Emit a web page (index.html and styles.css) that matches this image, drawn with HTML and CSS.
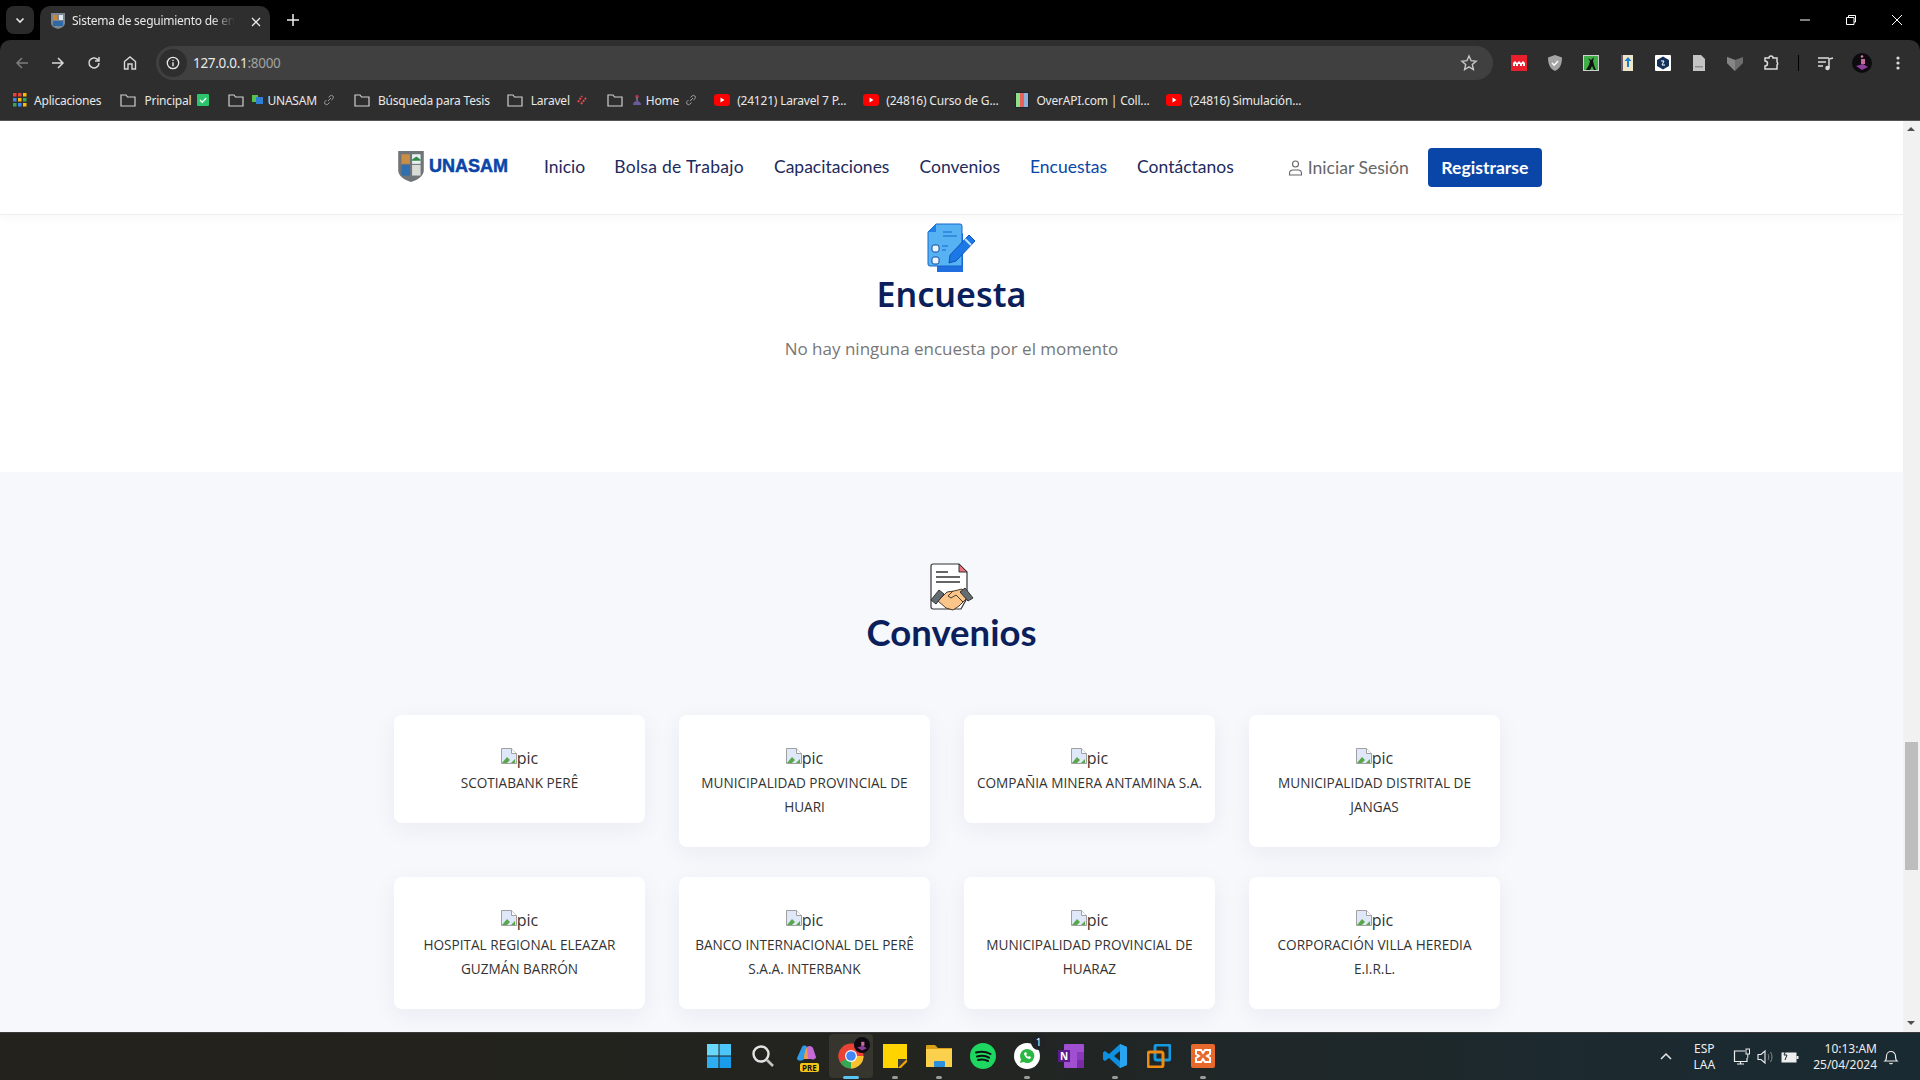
FILE: index.html
```html
<!DOCTYPE html>
<html lang="es">
<head>
  <meta charset="UTF-8" />
  <meta name="viewport" content="width=device-width, initial-scale=1.0"/>
  <title>Sistema de seguimiento de egresados</title>
  <link rel="stylesheet" href="styles.css">
</head>
<body>

<!-- browser: tabs -->
<div class="tabstrip">
  <div class="tab-search"><svg width="12" height="12" viewBox="0 0 12 12"><path d="M2.5 4.5 6 8l3.500-3.500" fill="none" stroke="#e8e8e8" stroke-width="1.600"/></svg></div>
  <div class="tab">
    <svg class="tab-icon" width="16" height="18" viewBox="0 0 16 18"><path d="M1 1h14v10c0 3-3 5-7 6-4-1-7-3-7-6z" fill="#7d8791"/><rect x="3" y="3" width="4" height="5" fill="#c9873a"/><rect x="9" y="3" width="4" height="5" fill="#dfe9ef"/><rect x="3" y="9" width="10" height="5" fill="#2f69a8"/></svg>
    <span class="tab-title">Sistema de seguimiento de en</span>
    <svg class="tab-x" width="10" height="10" viewBox="0 0 10 10"><path d="M1 1l8 8M9 1 1 9" stroke="#e8e8e8" stroke-width="1.300"/></svg>
  </div>
  <svg class="tab-new" width="14" height="14" viewBox="0 0 14 14"><path d="M7 1v12M1 7h12" stroke="#f0f0f0" stroke-width="1.500"/></svg>
  <div class="win-btns">
    <svg width="12" height="12" viewBox="0 0 12 12"><path d="M1 6h10" stroke="#fff"/></svg>
    <svg width="12" height="12" viewBox="0 0 12 12"><path d="M3.500 3V1.500h7V8H9M1.500 3.500H9V10.500H1.500z" fill="none" stroke="#fff"/></svg>
    <svg width="12" height="12" viewBox="0 0 12 12"><path d="M1 1l10 10M11 1 1 11" stroke="#fff"/></svg>
  </div>
</div>

<!-- browser: address bar -->
<div class="toolbar">
  <svg class="nav-btn" width="16" height="16" viewBox="0 0 16 16"><path d="M14 8H3M8 3 3 8l5 5" fill="none" stroke="#7d7d7d" stroke-width="1.500"/></svg>
  <svg class="nav-btn" width="16" height="16" viewBox="0 0 16 16"><path d="M2 8h11M8 3l5 5-5 5" fill="none" stroke="#d8d8d8" stroke-width="1.500"/></svg>
  <svg class="nav-btn" width="16" height="16" viewBox="0 0 16 16"><path d="M13 8a5 5 0 1 1-1.500-3.600L13 6M13 2v4H9" fill="none" stroke="#d8d8d8" stroke-width="1.500"/></svg>
  <svg class="nav-btn" width="16" height="16" viewBox="0 0 16 16"><path d="M2.500 14V6.500L8 2l5.500 4.500V14H10V9H6v5z" fill="none" stroke="#d8d8d8" stroke-width="1.400"/></svg>
  <div class="omnibox">
    <span class="info-chip"><svg width="14" height="14" viewBox="0 0 14 14"><circle cx="7" cy="7" r="5.700" fill="none" stroke="#e8e8e8" stroke-width="1.300"/><path d="M7 6.200v4M7 3.800v1.200" stroke="#e8e8e8" stroke-width="1.400"/></svg></span>
    <span class="url">127.0.0.1<span class="url-port">:8000</span></span>
    <svg class="star" width="18" height="18" viewBox="0 0 18 18"><path d="m9 2 2.100 4.700 5 .5-3.800 3.300 1.100 5L9 12.900l-4.400 2.600 1.100-5L1.900 7.200l5-.5z" fill="none" stroke="#c8c8c8" stroke-width="1.400"/></svg>
  </div>
  <div class="ext-icons">
    <svg width="16" height="16" viewBox="0 0 16 16"><rect width="16" height="16" fill="#e8202e"/><path d="M2 11V8l2-2 2 2 2-2 2 2 2-2 2 2v3h-2V9h-1v2H9V9H7v2H5V9H4v2z" fill="#fff"/></svg>
    <svg width="16" height="16" viewBox="0 0 16 16"><path d="M8 0l7 2.500C15 9 13 14 8 16 3 14 1 9 1 2.500z" fill="#a4a4a4"/><path d="m5 8 2.200 2.200L11 6" fill="none" stroke="#fff" stroke-width="1.400"/></svg>
    <svg width="16" height="16" viewBox="0 0 16 16"><rect width="16" height="16" fill="#cfcfcf"/><rect x="1" y="1" width="14" height="14" fill="#3fae49"/><path d="M3 15l3-5 1-4-2-3 3 2 3-3-1 4 1 4 2 5h-2l-2-4-2 4z" fill="#111"/></svg>
    <svg width="16" height="16" viewBox="0 0 16 16"><rect x="2" width="12" height="16" fill="#efe6c8"/><rect x="2" width="2" height="16" fill="#6c5a70"/><path d="M9 2 5.500 6H8v6h2V6h2.500z" fill="#1c7fd0"/></svg>
    <svg width="16" height="16" viewBox="0 0 16 16"><rect width="16" height="16" rx="1" fill="#fff"/><path d="M8 1.500 14 5v6l-6 3.500L2 11V5z" fill="#12315a"/><path d="M6 6h3M7 10h3M9 6l-2 4" stroke="#fff"/></svg>
    <svg width="16" height="16" viewBox="0 0 16 16"><path d="M2 0h8l4 4v12H2z" fill="#c4c4c4"/><rect x="4" y="11" width="8" height="1.500" fill="#8d8d8d"/></svg>
    <svg width="16" height="16" viewBox="0 0 16 16"><path d="M0 2l8 3 8-3v6l-8 8-8-8z" fill="#6d6d6d"/><path d="M8 5v11L0 8V2z" fill="#858585"/></svg>
    <svg width="16" height="16" viewBox="0 0 16 16"><path d="M2 3h4a2 2 0 0 1 4 0h4v4a2 2 0 0 1 0 3v4H2v-3a2 2 0 0 0 0-5z" fill="none" stroke="#dcdcdc" stroke-width="1.500"/></svg>
    <span class="ext-sep"></span>
    <svg width="16" height="16" viewBox="0 0 16 16"><path d="M0 3h11M0 7h8M0 11h5" stroke="#dcdcdc" stroke-width="1.400"/><path d="M11 13V4l4-1" fill="none" stroke="#dcdcdc" stroke-width="1.500"/><circle cx="9.500" cy="13" r="2.200" fill="#dcdcdc"/></svg>
    <svg class="ext-avatar" width="20" height="20" viewBox="0 0 20 20"><circle cx="10" cy="10" r="10" fill="#0d0a10"/><path d="M4 13l7-2 5 3-6 3z" fill="#8d3f9c"/><rect x="9" y="6" width="4" height="5" fill="#c66ca0"/><circle cx="10" cy="3.500" r="1.300" fill="#d4839a"/></svg>
    <svg width="16" height="16" viewBox="0 0 16 16"><circle cx="8" cy="3" r="1.600" fill="#dcdcdc"/><circle cx="8" cy="8" r="1.600" fill="#dcdcdc"/><circle cx="8" cy="13" r="1.600" fill="#dcdcdc"/></svg>
  </div>
</div>

<!-- browser: bookmarks -->
<div class="bookmarks">
  <a class="bm bm-apps"><svg width="14" height="14" viewBox="0 0 14 14"><g fill="#ea4335"><rect width="3.500" height="3.500"/><rect x="5" width="3.500" height="3.500"/></g><rect x="10" width="3.500" height="3.500" fill="#fbbc05"/><rect y="5" width="3.500" height="3.500" fill="#4285f4"/><rect x="5" y="5" width="3.500" height="3.500" fill="#fbbc05"/><rect x="10" y="5" width="3.500" height="3.500" fill="#34a853"/><rect y="10" width="3.500" height="3.500" fill="#34a853"/><rect x="5" y="10" width="3.500" height="3.500" fill="#4285f4"/><rect x="10" y="10" width="3.500" height="3.500" fill="#fbbc05"/></svg>Aplicaciones</a>
  <a class="bm"><svg class="folder" width="16" height="14" viewBox="0 0 16 14"><path d="M1 2h5l1.500 2H15v9H1z" fill="none" stroke="#cfcfcf" stroke-width="1.200"/></svg>Principal <svg width="12" height="12" viewBox="0 0 12 12"><rect width="12" height="12" rx="1" fill="#2cc46b"/><path d="m3 6 2.200 2.200L9.200 4" fill="none" stroke="#fff" stroke-width="1.300"/></svg></a>
  <a class="bm"><svg class="folder" width="16" height="14" viewBox="0 0 16 14"><path d="M1 2h5l1.500 2H15v9H1z" fill="none" stroke="#cfcfcf" stroke-width="1.200"/></svg><span class="bm-tight"><svg width="12" height="12" viewBox="0 0 12 12"><rect y="1" width="6" height="7" fill="#58c24a"/><rect x="4" y="3" width="7" height="7" fill="#2f7fd6"/></svg>UNASAM</span><svg width="12" height="12" viewBox="0 0 12 12"><path d="M5 7l3-3M3.500 6 2 7.500a2 2 0 0 0 2.800 2.800L6.500 8.500M5.500 3.500 7.200 1.800A2 2 0 0 1 10 4.600L8.500 6" fill="none" stroke="#a0a0a0"/></svg></a>
  <a class="bm bm-search"><svg class="folder" width="16" height="14" viewBox="0 0 16 14"><path d="M1 2h5l1.500 2H15v9H1z" fill="none" stroke="#cfcfcf" stroke-width="1.200"/></svg>Búsqueda para Tesis</a>
  <a class="bm"><svg class="folder" width="16" height="14" viewBox="0 0 16 14"><path d="M1 2h5l1.500 2H15v9H1z" fill="none" stroke="#cfcfcf" stroke-width="1.200"/></svg>Laravel <svg width="12" height="12" viewBox="0 0 12 12"><path d="M2 8l4-6M5 10l5-6" stroke="#e8464a" stroke-width="2" stroke-dasharray="2 1"/></svg></a>
  <a class="bm"><svg class="folder" width="16" height="14" viewBox="0 0 16 14"><path d="M1 2h5l1.500 2H15v9H1z" fill="none" stroke="#cfcfcf" stroke-width="1.200"/></svg><span class="bm-tight"><svg width="12" height="12" viewBox="0 0 12 12"><circle cx="6" cy="2.500" r="1.800" fill="#b0324a"/><rect x="5.300" y="3" width="1.400" height="4" fill="#8a7a9a"/><path d="M2 11c0-3 2-4 4-4s4 1 4 4z" fill="#6b5a9a"/></svg>Home</span><svg width="12" height="12" viewBox="0 0 12 12"><path d="M5 7l3-3M3.500 6 2 7.500a2 2 0 0 0 2.800 2.800L6.500 8.500M5.500 3.500 7.200 1.800A2 2 0 0 1 10 4.600L8.500 6" fill="none" stroke="#a0a0a0"/></svg></a>
  <a class="bm bm-yt"><svg width="16" height="12" viewBox="0 0 16 12"><rect width="16" height="12" rx="3" fill="#f00"/><path d="m6.500 3.500 4 2.500-4 2.500z" fill="#fff"/></svg>(24121) Laravel 7 P...</a>
  <a class="bm bm-yt"><svg width="16" height="12" viewBox="0 0 16 12"><rect width="16" height="12" rx="3" fill="#f00"/><path d="m6.500 3.500 4 2.500-4 2.500z" fill="#fff"/></svg>(24816) Curso de G...</a>
  <a class="bm bm-yt"><svg width="14" height="16" viewBox="0 0 14 16"><rect width="14" height="16" fill="#1c2530"/><rect x="1" y="1" width="4" height="14" fill="#8fe08a"/><rect x="5" y="1" width="4" height="14" fill="#e8605a"/><rect x="9" y="1" width="4" height="14" fill="#8fb0d8"/></svg>OverAPI.com | Coll...</a>
  <a class="bm bm-yt"><svg width="16" height="12" viewBox="0 0 16 12"><rect width="16" height="12" rx="3" fill="#f00"/><path d="m6.500 3.500 4 2.500-4 2.500z" fill="#fff"/></svg>(24816) Simulación...</a>
</div>

<!-- the page itself -->
<div class="viewport">
  <div class="page">
    <header class="site-header">
      <a class="brand">
        <svg width="28" height="33" viewBox="0 0 26 31"><path d="M1 1h24v18c0 5-5 9-12 11C6 28 1 24 1 19z" fill="#6f7478"/><rect x="4" y="4" width="8" height="9" fill="#c98d45"/><rect x="14" y="4" width="8" height="9" fill="#e8f1ef"/><path d="M14 9l4-3 4 3v1h-8z" fill="#2f8a4a"/><rect x="4" y="14" width="8" height="10" fill="#2f6fb0"/><rect x="14" y="14" width="8" height="10" fill="#d9dcd6"/></svg>
        <span class="brand-name">UNASAM</span>
      </a>
      <nav class="main-nav">
        <a>Inicio</a>
        <a>Bolsa de Trabajo</a>
        <a>Capacitaciones</a>
        <a>Convenios</a>
        <a class="active">Encuestas</a>
        <a>Contáctanos</a>
      </nav>
      <a class="login">
        <svg width="15" height="16" viewBox="0 0 15 16"><circle cx="7.500" cy="4" r="3" fill="none" stroke="#666" stroke-width="1.100"/><path d="M1.500 15v-1.500c0-2 1.500-3.500 3.500-3.500h5c2 0 3.500 1.500 3.500 3.500V15z" fill="none" stroke="#666" stroke-width="1.100"/></svg>
        Iniciar Sesión
      </a>
      <a class="btn-register">Registrarse</a>
    </header>

    <section class="survey">
      <svg class="section-icon" width="50" height="52" viewBox="0 0 50 50">
        <path d="M8 4h24l2 2v38H8z" fill="#1f6fe0" transform="translate(2 4)"/>
        <path d="M9 0h24a2 2 0 0 1 2 2v40H3a2 2 0 0 1-2-2V8z" fill="#56b2f2" stroke="#1666cc"/>
        <path d="M9 0v8H1z" fill="#1f7fe6"/>
        <path d="M16 8h9M16 12h14" stroke="#1666cc" stroke-width="1.200"/>
        <rect x="5" y="21" width="7" height="7" rx="2" fill="#eaf6ff" stroke="#124f9f"/>
        <rect x="5" y="33" width="7" height="7" rx="2" fill="#eaf6ff" stroke="#124f9f"/>
        <path d="M15 22h6M15 26h4" stroke="#1666cc" stroke-width="1.200"/>
        <path d="M42 11l6 6-19 20-7 2 1-8z" fill="#1b78e6" stroke="#0f55b5"/>
        <path d="m38 15 6 6" stroke="#bfe4ff" stroke-width="2"/>
      </svg>
      <h2 class="title-noto">Encuesta</h2>
      <p class="empty-msg">No hay ninguna encuesta por el momento</p>
    </section>

    <section class="agreements">
      <svg class="section-icon" width="46" height="50" viewBox="0 0 46 50">
        <path d="M2 3a2 2 0 0 1 2-2h26l8 8v26L32 46H4a2 2 0 0 1-2-2z" fill="#fff" stroke="#333" stroke-width="1.200"/>
        <path d="M30 1v8h8z" fill="#ef6f7a" stroke="#333"/>
        <path d="M7 9h12M7 14h24M7 19h24" stroke="#333" stroke-width="1.300"/>
        <path d="M9 38l9-9 7-1 8-2 6 8-9 9-6 4-7-2z" fill="#fbc58a" stroke="#4a3a2a"/>
        <path d="M24 28l-5 5 3 2 5-3 7 7" fill="none" stroke="#4a3a2a"/>
        <path d="M2 37l8-10 5 4-8 10zM44 35l-8-10-5 4 8 9z" fill="#656b72" stroke="#333"/>
      </svg>
      <h2>Convenios</h2>
      <div class="agreements-grid">
        <div class="agreement-card">
          <div class="pic"><svg class="broken" width="16" height="16" viewBox="0 0 16 16"><path d="M.5.500h10l5 5v10H.5z" fill="#dfe8f8" stroke="#a0a0a0"/><path d="M10.500.500v5h5" fill="#fff" stroke="#a0a0a0"/><path d="M1 15l5-6 3 3-3 3z" fill="#58a84a"/><path d="M10 15l4-4v4z" fill="#58a84a"/></svg>pic</div>
          <p>SCOTIABANK PERÊ</p>
        </div>
        <div class="agreement-card">
          <div class="pic"><svg class="broken" width="16" height="16" viewBox="0 0 16 16"><path d="M.5.500h10l5 5v10H.5z" fill="#dfe8f8" stroke="#a0a0a0"/><path d="M10.500.500v5h5" fill="#fff" stroke="#a0a0a0"/><path d="M1 15l5-6 3 3-3 3z" fill="#58a84a"/><path d="M10 15l4-4v4z" fill="#58a84a"/></svg>pic</div>
          <p>MUNICIPALIDAD PROVINCIAL DE HUARI</p>
        </div>
        <div class="agreement-card">
          <div class="pic"><svg class="broken" width="16" height="16" viewBox="0 0 16 16"><path d="M.5.500h10l5 5v10H.5z" fill="#dfe8f8" stroke="#a0a0a0"/><path d="M10.500.500v5h5" fill="#fff" stroke="#a0a0a0"/><path d="M1 15l5-6 3 3-3 3z" fill="#58a84a"/><path d="M10 15l4-4v4z" fill="#58a84a"/></svg>pic</div>
          <p>COMPAÑIA MINERA ANTAMINA S.A.</p>
        </div>
        <div class="agreement-card">
          <div class="pic"><svg class="broken" width="16" height="16" viewBox="0 0 16 16"><path d="M.5.500h10l5 5v10H.5z" fill="#dfe8f8" stroke="#a0a0a0"/><path d="M10.500.500v5h5" fill="#fff" stroke="#a0a0a0"/><path d="M1 15l5-6 3 3-3 3z" fill="#58a84a"/><path d="M10 15l4-4v4z" fill="#58a84a"/></svg>pic</div>
          <p>MUNICIPALIDAD DISTRITAL DE JANGAS</p>
        </div>
        <div class="agreement-card">
          <div class="pic"><svg class="broken" width="16" height="16" viewBox="0 0 16 16"><path d="M.5.500h10l5 5v10H.5z" fill="#dfe8f8" stroke="#a0a0a0"/><path d="M10.500.500v5h5" fill="#fff" stroke="#a0a0a0"/><path d="M1 15l5-6 3 3-3 3z" fill="#58a84a"/><path d="M10 15l4-4v4z" fill="#58a84a"/></svg>pic</div>
          <p>HOSPITAL REGIONAL ELEAZAR GUZMÁN BARRÓN</p>
        </div>
        <div class="agreement-card">
          <div class="pic"><svg class="broken" width="16" height="16" viewBox="0 0 16 16"><path d="M.5.500h10l5 5v10H.5z" fill="#dfe8f8" stroke="#a0a0a0"/><path d="M10.500.500v5h5" fill="#fff" stroke="#a0a0a0"/><path d="M1 15l5-6 3 3-3 3z" fill="#58a84a"/><path d="M10 15l4-4v4z" fill="#58a84a"/></svg>pic</div>
          <p>BANCO INTERNACIONAL DEL PERÊ S.A.A. INTERBANK</p>
        </div>
        <div class="agreement-card">
          <div class="pic"><svg class="broken" width="16" height="16" viewBox="0 0 16 16"><path d="M.5.500h10l5 5v10H.5z" fill="#dfe8f8" stroke="#a0a0a0"/><path d="M10.500.500v5h5" fill="#fff" stroke="#a0a0a0"/><path d="M1 15l5-6 3 3-3 3z" fill="#58a84a"/><path d="M10 15l4-4v4z" fill="#58a84a"/></svg>pic</div>
          <p>MUNICIPALIDAD PROVINCIAL DE HUARAZ</p>
        </div>
        <div class="agreement-card">
          <div class="pic"><svg class="broken" width="16" height="16" viewBox="0 0 16 16"><path d="M.5.500h10l5 5v10H.5z" fill="#dfe8f8" stroke="#a0a0a0"/><path d="M10.500.500v5h5" fill="#fff" stroke="#a0a0a0"/><path d="M1 15l5-6 3 3-3 3z" fill="#58a84a"/><path d="M10 15l4-4v4z" fill="#58a84a"/></svg>pic</div>
          <p>CORPORACIÓN VILLA HEREDIA E.I.R.L.</p>
        </div>
      </div>
    </section>
  </div>

  <div class="scrollbar">
    <span class="arrow-up"></span>
    <div class="scroll-track"><div class="scroll-thumb"></div></div>
    <span class="arrow-down"></span>
  </div>
</div>

<!-- windows taskbar -->
<div class="taskbar">
  <div class="task-icons">
    <div class="task-item"><svg width="24" height="24" viewBox="0 0 24 24"><g fill="#35b8f4"><rect width="11.500" height="11.500" fill="#6ad8fb"/><rect x="12.500" width="11.500" height="11.500" fill="#4cc6f8"/><rect y="12.500" width="11.500" height="11.500" fill="#2eaef0"/><rect x="12.500" y="12.500" width="11.500" height="11.500" fill="#1b9cea"/></g></svg></div>
    <div class="task-item"><svg width="24" height="24" viewBox="0 0 24 24"><circle cx="10" cy="10" r="7.500" fill="none" stroke="#e4e4e4" stroke-width="2.400"/><path d="m16 16 6 6" stroke="#c4c4c4" stroke-width="2.600"/></svg></div>
    <div class="task-item">
      <svg width="26" height="24" viewBox="0 0 26 24"><path d="M3 14 8 3c1-2 4-2 5 0l-3 12c-1 2-7 3-7-1z" fill="#2f9be8"/><path d="M10 15 13 3c2-2 5-1 6 1l3 9c0 2-3 3-5 2z" fill="#c46bd8"/><path d="M13 3c-2 3-3 8-3 12h4z" fill="#f0a040"/></svg>
      <span class="pre-badge">PRE</span>
    </div>
    <div class="task-item task-active">
      <svg width="26" height="26" viewBox="0 0 26 26"><circle cx="13" cy="13" r="12.500" fill="#ea4335"/><path d="M13 13 2.200 19.300A12.500 12.500 0 0 1 2.200 6.700z" fill="#ea4335"/><path d="M13 13H25.500A12.500 12.500 0 0 1 13 25.500 12.500 12.500 0 0 1 2.200 19.300z" fill="#34a853"/><path d="M13 13h12.500a12.500 12.500 0 0 1-12.500 12.500z" fill="#fbc02d"/><circle cx="13" cy="13" r="6" fill="#fff"/><circle cx="13" cy="13" r="4.800" fill="#4285f4"/></svg>
      <svg class="chrome-avatar" width="16" height="16" viewBox="0 0 20 20"><circle cx="10" cy="10" r="10" fill="#0d0a10"/><path d="M4 13l7-2 5 3-6 3z" fill="#8d3f9c"/><rect x="9" y="6" width="4" height="5" fill="#c66ca0"/></svg>
    </div>
    <div class="task-item task-open"><svg width="24" height="24" viewBox="0 0 24 24"><path d="M0 0h24v15l-9 9H0z" fill="#ffd400"/><path d="M15 24v-9h9z" fill="#3a3a3a"/><path d="M24 15v3l-6 6h-3z" fill="#f0a500"/></svg></div>
    <div class="task-item task-open"><svg width="26" height="24" viewBox="0 0 26 24"><path d="M0 2a1 1 0 0 1 1-1h8l3 3h14v5H0z" fill="#d9a017"/><path d="M0 5h26v18H0z" fill="#fbd04c"/><rect x="8" y="17" width="11" height="6" rx="1" fill="#2b8fe0"/></svg></div>
    <div class="task-item"><svg width="26" height="26" viewBox="0 0 26 26"><circle cx="13" cy="13" r="13" fill="#1ed760"/><path d="M6 9.500c5-1.500 10-1 14.500 1.500M7 13.500c4-1 9-.8 12 1.200M8 17c3.500-.8 7-.5 10 1" fill="none" stroke="#111" stroke-width="2" stroke-linecap="round"/></svg></div>
    <div class="task-item task-open">
      <svg width="26" height="26" viewBox="0 0 26 26"><circle cx="13" cy="13" r="13" fill="#fff"/><path d="M13 6a7 7 0 0 0-6 10.500L6 20l3.700-1A7 7 0 1 0 13 6z" fill="#2cb742"/><path d="M10 10c0 3 3 6 6 6l1-2-2-1-1 1-2-2 1-1-1-2z" fill="#fff"/></svg>
      <span class="wa-badge">1</span>
    </div>
    <div class="task-item"><svg width="26" height="24" viewBox="0 0 26 24"><rect x="6" width="20" height="24" rx="1" fill="#a04fd0"/><rect x="19" y="8" width="7" height="8" fill="#8a3ab8"/><rect x="19" y="16" width="7" height="8" fill="#7a2ca5"/><rect y="6" width="12" height="12" fill="#5b1a8c"/><text x="6" y="16" class="one-n">N</text></svg></div>
    <div class="task-item task-open"><svg width="24" height="24" viewBox="0 0 24 24"><path d="M17 0 24 3v18l-7 3L6 14l-4 3-2-1.500V8.500L2 7l4 3zM17 7l-6 5 6 5z" fill="#0f8fe0"/><path d="M17 0l7 3v18l-7 3z" fill="#2aa5ef"/></svg></div>
    <div class="task-item"><svg width="24" height="24" viewBox="0 0 24 24"><rect x="8" y="1" width="15" height="15" rx="2" fill="none" stroke="#149ae0" stroke-width="3"/><rect x="1" y="8" width="15" height="15" rx="2" fill="none" stroke="#ef8a12" stroke-width="3"/></svg></div>
    <div class="task-item task-open"><svg width="24" height="24" viewBox="0 0 24 24"><rect width="24" height="24" rx="2" fill="#e8692c"/><path d="M5 6h5l2 3 2-3h5v4l-3 2 3 2v4h-5l-2-3-2 3H5v-4l3-2-3-2z" fill="none" stroke="#fff" stroke-width="2"/></svg></div>
  </div>
  <div class="tray">
    <svg class="tray-up" width="14" height="10" viewBox="0 0 14 10"><path d="m2 7 5-5 5 5" fill="none" stroke="#e8e8e8" stroke-width="1.500"/></svg>
    <div class="tray-lang">ESP<br>LAA</div>
    <svg width="18" height="18" viewBox="0 0 18 18"><path d="M12 3H1.500v10.500H14V10M4 16h7M7.500 13.500V16" fill="none" stroke="#eee" stroke-width="1.200"/><rect x="13" y="1" width="3.500" height="5" fill="none" stroke="#eee"/><path d="M14.800 6v4" stroke="#eee"/></svg>
    <svg width="18" height="18" viewBox="0 0 18 18"><path d="M1 6.500h3L8 3v12l-4-3.500H1z" fill="none" stroke="#eee" stroke-width="1.100"/><path d="M11 6c1 2 1 4 0 6M13.500 4c2 3 2 7 0 10" fill="none" stroke="#888"/></svg>
    <svg width="18" height="14" viewBox="0 0 18 14"><rect x="1" y="3" width="14" height="9" fill="#eee" stroke="#eee"/><rect x="15.500" y="6" width="2" height="3" fill="#eee"/><path d="M5 0 3 5h3L4 10" fill="none" stroke="#1c2a30"/></svg>
    <div class="tray-clock">10:13:AM<br>25/04/2024</div>
    <svg width="16" height="16" viewBox="0 0 16 16"><path d="M2 12c1.500-1 1.500-3 1.500-5a4.500 4.500 0 0 1 9 0c0 2 0 4 1.500 5zM6.500 14c1 1 2 1 3 0" fill="none" stroke="#eee" stroke-width="1.100"/></svg>
  </div>
</div>

</body>
</html>
```

FILE: styles.css
```css
* {
  box-sizing: border-box;
}

html, body {
  margin: 0;
  height: 100%;
  overflow: hidden;
}

body {
  display: flex;
  flex-direction: column;
  width: 1920px;
  height: 1080px;
  font-family: "Noto Sans", sans-serif;
  background-color: #000;
}

/* browser chrome */
.tabstrip {
  height: 40px;
  display: flex;
  align-items: flex-end;
  background-color: #000;
  color: #e8e8e8;
  font-size: 12px;
  flex-shrink: 0;
}

.tab-search {
  width: 28px;
  height: 28px;
  margin: 0 0 6px 6px;
  border-radius: 8px;
  background-color: #2a2a2a;
  display: flex;
  align-items: center;
  justify-content: center;
}

.tab {
  width: 230px;
  height: 34px;
  margin-left: 6px;
  padding: 0 9px 0 10px;
  display: flex;
  align-items: center;
  background-color: #2e2e2e;
  border-radius: 10px 10px 0 0;
}

.tab-icon {
  flex-shrink: 0;
  margin-right: 6px;
  margin-bottom: 4px;
}

.tab-title {
  white-space: nowrap;
  margin-bottom: 5px;
  letter-spacing: -0.25px;
  -webkit-mask-image: linear-gradient(90deg, #000 86%, transparent 100%);
  mask-image: linear-gradient(90deg, #000 86%, transparent 100%);
}

.tab-x {
  flex-shrink: 0;
  margin-left: auto;
  margin-bottom: 2px;
}

.tab-new {
  margin: 0 0 13px 16px;
}

.win-btns {
  margin-left: auto;
  height: 40px;
  padding-right: 17px;
  display: flex;
  align-items: center;
  gap: 34px;
}

.toolbar {
  height: 40px;
  display: flex;
  align-items: center;
  padding: 6px 0 0 14px;
  background-color: #2e2e2e;
  border-radius: 10px 10px 0 0;
  flex-shrink: 0;
}

.nav-btn {
  margin-right: 20px;
  flex-shrink: 0;
}

.omnibox {
  width: 1337px;
  height: 34px;
  margin-left: -2px;
  display: flex;
  align-items: center;
  background-color: #404040;
  border-radius: 17px;
  font-size: 13.500px;
  color: #e8e8e8;
}

.info-chip {
  width: 28px;
  height: 28px;
  margin-left: 3px;
  border-radius: 50%;
  background-color: #2e2e2e;
  display: flex;
  align-items: center;
  justify-content: center;
}

.url {
  margin-left: 6px;
  letter-spacing: -0.3px;
}

.url-port {
  color: #a0a0a0;
}

.star {
  margin-left: auto;
  margin-right: 15px;
}

.ext-icons {
  margin-left: 18px;
  display: flex;
  align-items: center;
  gap: 20px;
}

.ext-sep {
  width: 1px;
  height: 16px;
  margin: 0 -1px;
  background-color: #000;
}

.ext-avatar {
  margin: 0 -2px;
}

.bookmarks {
  height: 41px;
  display: flex;
  align-items: center;
  padding-left: 13px;
  background-color: #2e2e2e;
  border-bottom: 1px solid #555;
  color: #e8e8e8;
  font-size: 12px;
  letter-spacing: -0.2px;
  gap: 19px;
  flex-shrink: 0;
}

.bm {
  display: flex;
  align-items: center;
  white-space: nowrap;
  gap: 6px;
}

.bm-apps svg,
.bm-yt svg {
  margin-right: 1px;
}

.bm-yt {
  margin-left: -2px;
}

.bm-search {
  margin-right: -2px;
}

.bm .folder {
  margin-right: 2px;
}

.bm-tight {
  display: flex;
  align-items: center;
  gap: 3px;
}

/* page */
.viewport {
  flex: 1;
  display: flex;
  min-height: 0;
  background-color: #fff;
}

.page {
  width: 1903px;
  overflow: hidden;
  font-family: "Lato", sans-serif;
}

.site-header {
  height: 94px;
  padding: 0 0 2px 397px;
  display: flex;
  align-items: center;
  border-bottom: 1px solid #eee;
  box-shadow: 0 2px 10px rgba(0, 0, 0, 0.04);
  position: relative;
}

.brand {
  display: flex;
  align-items: center;
  gap: 4px;
}

.brand-name {
  font-family: "Liberation Sans", sans-serif;
  font-weight: 700;
  font-size: 18px;
  color: #0a46a8;
  -webkit-text-stroke: 0.5px #0a46a8;
}

.main-nav {
  display: flex;
  gap: 30px;
  margin-left: 36px;
  font-size: 17.500px;
  color: #1d2a5c;
}

.main-nav a:nth-child(2) {
  margin-left: -1px;
  letter-spacing: 0.3px;
}

.main-nav .active {
  color: #0a46a8;
}

.login {
  display: flex;
  align-items: center;
  gap: 5px;
  margin: 2px 0 0 54px;
  font-size: 17.600px;
  color: #666;
}

.btn-register {
  margin: 2px 0 0 19px;
  width: 114px;
  height: 39px;
  display: flex;
  align-items: center;
  justify-content: center;
  border-radius: 4px;
  background-color: #0a46a8;
  color: #fff;
  font-size: 17.600px;
  font-weight: 700;
}

.survey {
  height: 257px;
  padding-top: 8px;
  text-align: center;
}

.section-icon {
  display: block;
  margin: 0 auto;
}

h2 {
  margin: 0;
  font-size: 36.500px;
  line-height: 38px;
  font-weight: 700;
  color: #0b1f5c;
  text-align: center;
}

.title-noto {
  font-family: "Noto Sans", sans-serif;
  font-size: 34px;
  font-weight: 600;
}

.empty-msg {
  margin: 24px 0 0;
  font-family: "Open Sans", sans-serif;
  font-size: 17px;
  line-height: 24px;
  color: #777;
}

.agreements {
  height: 560px;
  padding-top: 91px;
  background-color: #f6f8fc;
}

.agreements-grid {
  display: grid;
  grid-template-columns: repeat(4, 251px);
  gap: 30px 34px;
  align-items: start;
  margin: 64px 0 0 394px;
}

.agreement-card {
  padding: 28px 12px;
  background-color: #fff;
  border-radius: 8px;
  box-shadow: 0 6px 24px rgba(30, 40, 90, 0.06);
  text-align: center;
  font-family: "Open Sans", sans-serif;
  color: #333;
}

.pic {
  height: 28px;
  padding-top: 2px;
  display: flex;
  justify-content: center;
  align-items: center;
  font-size: 16px;
}

.broken {
  margin-bottom: 4px;
}

.agreement-card p {
  margin: 0;
  font-size: 13.600px;
  line-height: 24px;
}

/* scrollbar */
.scrollbar {
  width: 17px;
  display: flex;
  flex-direction: column;
  align-items: center;
  background-color: #f1f1f1;
}

.arrow-up,
.arrow-down {
  height: 17px;
  width: 17px;
  position: relative;
}

.arrow-up::after,
.arrow-down::after {
  content: "";
  position: absolute;
  left: 4px;
  top: 6px;
  border-left: 4px solid transparent;
  border-right: 4px solid transparent;
}

.arrow-up::after {
  border-bottom: 4px solid #505050;
}

.arrow-down::after {
  border-top: 4px solid #505050;
}

.scroll-track {
  flex: 1;
  width: 100%;
  padding: 604px 2px 0;
}

.scroll-thumb {
  height: 128px;
  background-color: #bdbdbd;
}

/* taskbar */
.taskbar {
  height: 48px;
  display: flex;
  align-items: center;
  background: linear-gradient(90deg, #24221d 0%, #23241f 45%, #1c2a30 85%, #1a2a32 100%);
  border-top: 1px solid #3a3a3a;
  flex-shrink: 0;
}

.task-icons {
  display: flex;
  margin: -2px 0 0 697px;
}

.task-item {
  position: relative;
  width: 44px;
  height: 44px;
  display: flex;
  align-items: center;
  justify-content: center;
}

.task-active {
  background-color: #36362f;
  border-radius: 4px;
}

.task-active::after,
.task-open::after {
  content: "";
  position: absolute;
  bottom: -1px;
  left: 50%;
  transform: translateX(-50%);
  width: 6px;
  height: 3px;
  border-radius: 2px;
  background-color: #9a9a9a;
}

.task-active::after {
  width: 16px;
  background-color: #5cc4f5;
}

.pre-badge {
  position: absolute;
  left: 15px;
  bottom: 6px;
  padding: 0 2px;
  border-radius: 2px;
  background-color: #f5c518;
  color: #111;
  font-size: 8px;
  line-height: 9px;
  font-weight: 700;
}

.chrome-avatar {
  position: absolute;
  right: 3px;
  top: 3px;
}

.wa-badge {
  position: absolute;
  right: 3px;
  top: 1px;
  width: 15px;
  height: 15px;
  border-radius: 50%;
  background-color: #1f2328;
  color: #fff;
  font-size: 10px;
  line-height: 15px;
  text-align: center;
}

.one-n {
  fill: #fff;
  font-size: 10px;
  font-weight: 700;
  text-anchor: middle;
  font-family: "Noto Sans", sans-serif;
}

.tray {
  margin-left: auto;
  display: flex;
  align-items: center;
  padding-right: 15px;
  color: #eee;
  font-size: 12px;
  line-height: 16px;
}

.tray-lang {
  text-align: center;
  margin-right: 18px;
}

.tray svg {
  margin-right: 6px;
}

.tray svg.tray-up {
  margin-right: 21px;
}

.tray-clock {
  margin-left: 8px;
  margin-right: 6px;
  text-align: right;
}
```
